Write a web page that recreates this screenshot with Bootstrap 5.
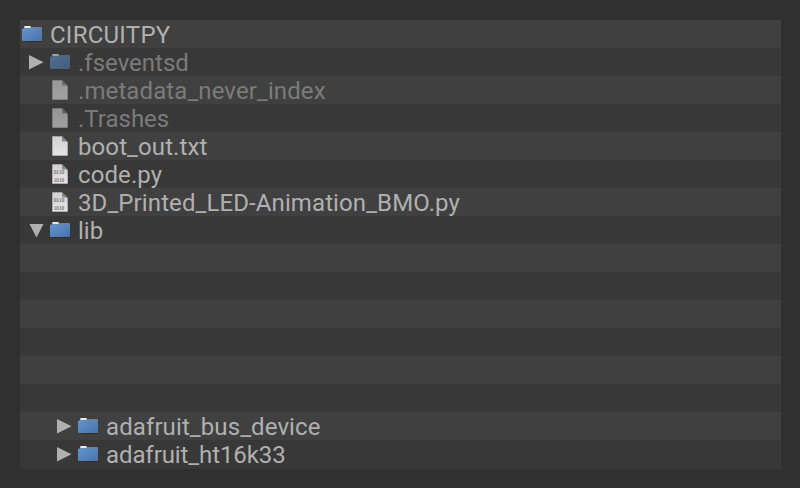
<!DOCTYPE html>
<html lang="en">
<head>
<meta charset="utf-8">
<meta name="viewport" content="width=device-width, initial-scale=1">
<title>CIRCUITPY</title>
<link href="https://cdn.jsdelivr.net/npm/bootstrap@5.3.0/dist/css/bootstrap.min.css" rel="stylesheet">
<style>
  body { background: #303030; font-family: Roboto, sans-serif; height: 488px; overflow: hidden; }
  .tree { width: 761px; margin: 20px 0 0 20px; }
  .tree-row { height: 28px; padding-left: 2px; background: #383838; color: #b0b0b0; font-size: 24px; line-height: 28px; white-space: nowrap; }
  .tree-row:nth-child(odd) { background: #404040; }
  .tree-row:last-child { height: 29px; }
  .cell { width: 28px; height: 28px; flex: none; display: block; }
  .level-2 { padding-left: 30px; }
  .dimmed .label { color: #7b7b7b; }
  .dimmed .kind { opacity: .6; }
  .label { padding-top: 1px; height: 28px; }
  .loose { letter-spacing: .1px; }
  .looser { letter-spacing: .25px; }
  .tight { letter-spacing: -.09px; }
  .bits { font: 6px "Liberation Serif", serif; fill: #444; }
</style>
</head>
<body>
<svg width="0" height="0" class="position-absolute" aria-hidden="true">
  <defs>
    <linearGradient id="blue" x1="0" y1="0" x2="1" y2="1"><stop offset="0" stop-color="#6494cd"/><stop offset="1" stop-color="#4773ac"/></linearGradient>
    <linearGradient id="paper" x1="0" y1="0" x2="0" y2="1"><stop offset="0" stop-color="#d2d2d2"/><stop offset="1" stop-color="#e4e4e4"/></linearGradient>
    <symbol id="folder" viewBox="0 0 28 28">
      <path d="M1 21h20v1H3z" fill="#303030"/>
      <path d="M2 9V7q0-1 1-1h5q1 0 1 1h10q1 0 1 1v2H2z" fill="#77818a"/>
      <path d="M2.500 8V6h6v2z" fill="#e6ece6"/>
      <path d="M0 9.500q0-1 1-1h18q1 0 1 1V20q0 1-1 1H1q-1 0-1-1z" fill="url(#blue)"/>
    </symbol>
    <symbol id="file" viewBox="0 0 28 28">
      <path d="M2 4h10l6 6v14H2z" fill="#777"/>
      <path d="M2.500 4.500h9.200l5.800 5.800v13.200h-15z" fill="url(#paper)"/>
      <path d="M12 4.300v5.200h5.500z" fill="#888"/>
    </symbol>
    <symbol id="code" viewBox="0 0 28 28">
      <use href="#file" width="28" height="28"/>
      <text class="bits" x="3.700" y="13.500" textLength="10.500" lengthAdjust="spacingAndGlyphs">0110</text>
      <text class="bits" x="3.700" y="21.700" textLength="10.500" lengthAdjust="spacingAndGlyphs">1010</text>
    </symbol>
    <symbol id="closed" viewBox="0 0 28 28"><path d="M7 7v14.500l14.500-7.300z" fill="#b0b0b0"/></symbol>
    <symbol id="open" viewBox="0 0 28 28"><path d="M7.500 8h14l-7 13.500z" fill="#b0b0b0"/></symbol>
  </defs>
</svg>
<main class="tree d-flex flex-column">
  <div class="tree-row d-flex"><svg class="cell kind"><use href="#folder"/></svg><span class="label looser">CIRCUITPY</span></div>
  <div class="tree-row d-flex dimmed"><svg class="cell"><use href="#closed"/></svg><svg class="cell kind"><use href="#folder"/></svg><span class="label">.fseventsd</span></div>
  <div class="tree-row d-flex dimmed"><span class="cell"></span><svg class="cell kind"><use href="#file"/></svg><span class="label loose">.metadata_never_index</span></div>
  <div class="tree-row d-flex dimmed"><span class="cell"></span><svg class="cell kind"><use href="#file"/></svg><span class="label">.Trashes</span></div>
  <div class="tree-row d-flex"><span class="cell"></span><svg class="cell kind"><use href="#file"/></svg><span class="label loose">boot_out.txt</span></div>
  <div class="tree-row d-flex"><span class="cell"></span><svg class="cell kind"><use href="#code"/></svg><span class="label loose">code.py</span></div>
  <div class="tree-row d-flex"><span class="cell"></span><svg class="cell kind"><use href="#code"/></svg><span class="label loose">3D_Printed_LED-Animation_BMO.py</span></div>
  <div class="tree-row d-flex"><svg class="cell"><use href="#open"/></svg><svg class="cell kind"><use href="#folder"/></svg><span class="label">lib</span></div>
  <div class="tree-row"></div>
  <div class="tree-row"></div>
  <div class="tree-row"></div>
  <div class="tree-row"></div>
  <div class="tree-row"></div>
  <div class="tree-row"></div>
  <div class="tree-row d-flex level-2"><svg class="cell"><use href="#closed"/></svg><svg class="cell kind"><use href="#folder"/></svg><span class="label loose">adafruit_bus_device</span></div>
  <div class="tree-row d-flex level-2"><svg class="cell"><use href="#closed"/></svg><svg class="cell kind"><use href="#folder"/></svg><span class="label tight">adafruit_ht16k33</span></div>
</main>
<script src="https://cdn.jsdelivr.net/npm/bootstrap@5.3.0/dist/js/bootstrap.bundle.min.js"></script>
</body>
</html>
